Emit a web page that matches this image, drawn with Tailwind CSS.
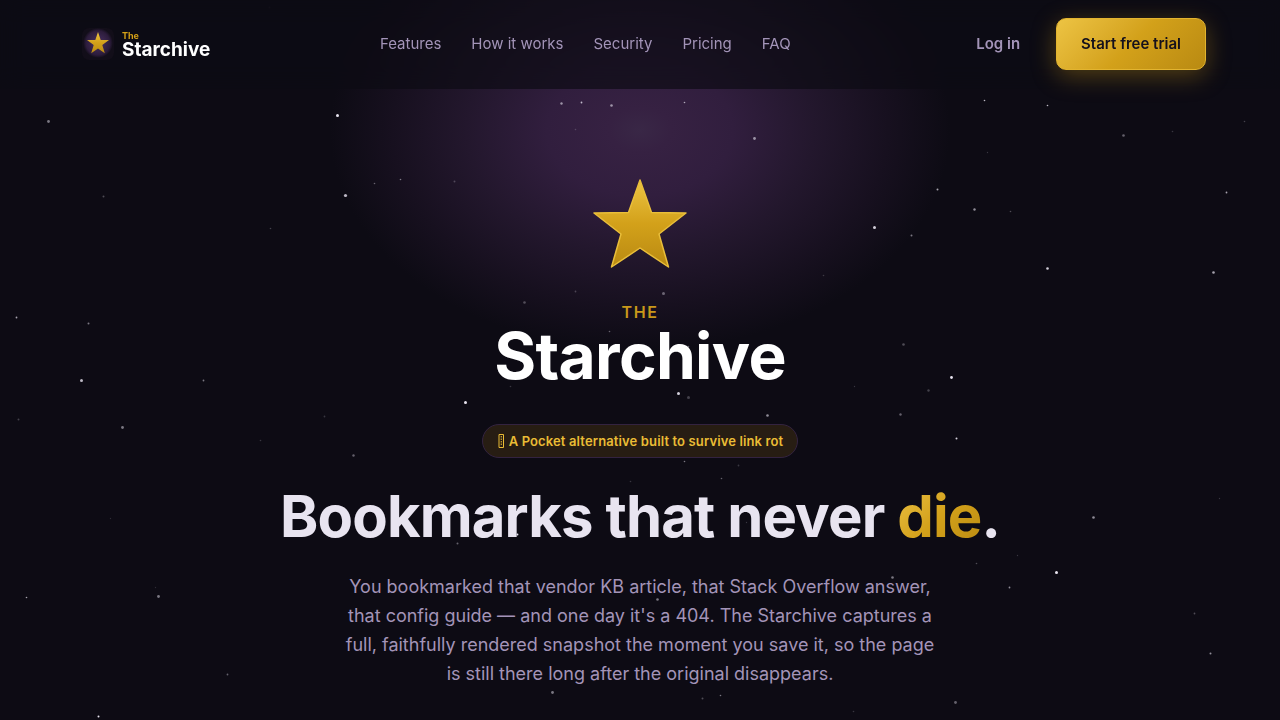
<!DOCTYPE html>
<html lang="en">
<head>
    <meta charset="UTF-8">
    <meta name="viewport" content="width=device-width, initial-scale=1.0">
    <title>The Starchive</title>
    <script src="https://cdn.jsdelivr.net/npm/@tailwindcss/browser@4"></script>
</head>
<body class="relative h-screen overflow-hidden bg-[#0d0b14] font-['Inter',sans-serif] text-[#e8e4f0]">
    <!-- Night sky -->
    <div class="absolute left-1/2 top-[-90px] h-[440px] w-[620px] -translate-x-1/2 bg-[radial-gradient(closest-side,#392746_0%,#362142_10%,#311e3e_30%,#23172d_56%,#17101f_80%,#0d0b14_100%)]"></div>
    <svg id="sky" class="absolute inset-0 h-full w-full" fill="#e8e4f0" aria-hidden="true"></svg>

    <!-- Nav -->
    <header class="relative z-10 border-b border-transparent bg-[#0d0b14]/70 backdrop-blur-md">
        <nav class="mx-auto flex max-w-[1180px] items-center justify-between px-6 py-[18px]">
            <a href="#" class="flex items-center gap-2 px-2">
                <svg class="h-8 w-8" viewBox="0 0 32 32">
                    <defs>
                        <radialGradient id="logoGlow">
                            <stop offset="0" stop-color="#4a3163"/>
                            <stop offset=".8" stop-color="#2c1c3b"/>
                            <stop offset="1" stop-color="#110d18"/>
                        </radialGradient>
                        <linearGradient id="gold" x1="0" y1="0" x2="0" y2="1">
                            <stop offset="0" stop-color="#edc443"/>
                            <stop offset=".5" stop-color="#d3a11a"/>
                            <stop offset="1" stop-color="#b98a12"/>
                        </linearGradient>
                    </defs>
                    <rect width="32" height="32" rx="7" fill="#120e19"/>
                    <circle cx="16" cy="15" r="15" fill="url(#logoGlow)"/>
                    <path d="M16 4l2.700 8h8.300l-6.700 5 2.500 8.300L16 20.500l-6.800 4.800 2.500-8.300L5 12h8.300z" fill="url(#gold)"/>
                </svg>
                <span class="flex flex-col font-bold">
                    <span class="text-[9px] leading-3 text-[#d4a017]">The</span>
                    <span class="text-[19px] leading-4 text-white">Starchive</span>
                </span>
            </a>
            <div class="flex gap-[30px] text-[15px] text-[#a394b8]">
                <a href="#">Features</a>
                <a href="#">How it works</a>
                <a href="#">Security</a>
                <a href="#">Pricing</a>
                <a href="#">FAQ</a>
            </div>
            <div class="flex items-center gap-3 text-[15px] font-semibold">
                <a href="#" class="px-6 text-[#a394b8]">Log in</a>
                <a href="#" class="rounded-[10px] border border-[#e3b42f] bg-linear-135 from-[#edc443] via-[#d3a11a] to-[#b98a12] px-6 py-[14px] leading-[22px] text-[#14101c] shadow-[0_6px_24px_rgba(212,160,23,0.35)]">Start free trial</a>
            </div>
        </nav>
    </header>

    <!-- Hero -->
    <main class="relative flex flex-col items-center px-6 pt-[85px] text-center">
        <svg class="h-[100px] w-[100px]" viewBox="0 0 100 100" aria-hidden="true">
            <path d="M50 6l11.500 32.500L96 39 69 60l9.500 33L50 74 21.500 93 31 60 4 39l34.500-.5z" fill="url(#gold)" stroke="#e9be3a" stroke-width="1.500" stroke-linejoin="round"/>
        </svg>
        <p class="mt-7 text-base leading-5 font-semibold tracking-widest text-[#c9981a]">THE</p>
        <p class="text-[64px] leading-[68px] font-bold tracking-[-0.01em] text-white">Starchive</p>
        <p class="mt-[34px] flex items-center gap-1 rounded-full border border-[#332340] bg-[#271d13] px-[14px] py-[6px] text-[13px] leading-5 font-semibold tracking-[0.01em] text-[#eabc35]">
            <svg class="h-4 w-2" viewBox="0 0 8 16" fill="none" stroke="currentColor" aria-hidden="true">
                <path d="M2 1.500h4.500v13H2z"/>
                <path d="M4.250 3v10" stroke-dasharray="1.500 1"/>
            </svg>
            A Pocket alternative built to survive link rot
        </p>
        <h1 class="mt-6 text-[58px] leading-[68px] font-bold tracking-[-0.015em]">Bookmarks that never <span class="bg-linear-135 from-[#edc443] via-[#d3a11a] to-[#b98a12] bg-clip-text text-transparent">die</span>.</h1>
        <p class="mt-[22px] max-w-[600px] text-lg leading-[29px] text-[#a394b8]">You bookmarked that vendor KB article, that Stack Overflow answer, that config guide — and one day it's a 404. The Starchive captures a full, faithfully rendered snapshot the moment you save it, so the page is still there long after the original disappears.</p>
    </main>

    <script>
        // x, y, radius, opacity
        const stars = [
            [48, 121, 1.4, .5], [103, 196, 1, .3], [337, 115, 1.5, 1], [345, 195, 1.6, .8], [374, 183, .8, .4],
            [400, 179, .8, .5], [454, 181, 1, .25], [270, 228, .8, .25], [269, 7, 1, .25], [561, 103, 1.2, .6],
            [581, 102, .9, .8], [611, 105, 1.3, .6], [684, 102, .8, .7], [754, 138, 1.4, .6], [984, 100, .8, .8],
            [1047, 105, .8, .8], [1123, 135, 1.3, .4], [1172, 131, .8, .2], [1244, 121, .8, .25], [987, 152, .7, .2],
            [937, 189, 1, .7], [974, 209, 1.2, .6], [1010, 211, .8, .3], [874, 227, 1.5, .9], [911, 235, 1, .5],
            [1226, 192, .9, .7], [1047, 268, 1.3, .9], [1213, 272, 1.3, .7], [823, 275, .8, .2], [16, 317, .9, .7],
            [88, 323, 1, .5], [81, 380, 1.5, .8], [203, 380, .9, .5], [18, 419, 1, .25], [122, 427, 1.4, .5],
            [324, 416, .9, .2], [260, 440, .8, .2], [353, 455, 1.2, .4], [465, 402, 1.5, 1], [524, 302, 1.3, .3],
            [575, 291, .9, .25], [663, 293, 1.5, .4], [609, 331, .8, .4], [688, 346, .8, .4], [510, 386, .8, .2],
            [678, 393, 1.5, .9], [688, 397, 1.5, .25], [767, 415, 1.3, .6], [903, 344, 1.3, .3], [951, 377, 1.4, 1],
            [928, 390, 1.2, .25], [900, 414, 1.2, .4], [854, 386, .7, .2], [956, 438, 1, .9], [684, 461, .8, .5],
            [738, 465, .9, .2], [721, 478, .8, .4], [630, 481, .8, .2], [746, 522, .7, .2], [1093, 517, 1.3, .6],
            [1219, 498, .7, .2], [517, 534, .9, 1], [457, 543, 1, .4], [976, 563, .8, .3], [1017, 555, .7, .2],
            [1056, 572, 1.5, 1], [1009, 587, .9, .6], [892, 577, 1.3, .5], [657, 599, 1.3, .5], [1194, 613, .9, .3],
            [1210, 653, 1, .6], [158, 596, 1.4, .5], [26, 597, .8, .7], [227, 674, .9, .4], [552, 692, 1.4, .5],
            [702, 698, 1, .3], [720, 695, .8, .5], [955, 702, 1.4, .4], [853, 711, .8, .2], [98, 716, 1, 1],
            [575, 129, .8, .2], [297, 70, .7, .15], [552, 75, .8, .15], [110, 518, .7, .15], [155, 587, .7, .15]
        ];

        const sky = document.getElementById('sky');
        stars.forEach(([x, y, r, opacity]) => {
            const star = document.createElementNS('http://www.w3.org/2000/svg', 'circle');
            star.setAttribute('cx', (x + 0.5) / 12.8 + '%');
            star.setAttribute('cy', (y + 0.5) / 7.2 + '%');
            star.setAttribute('r', r);
            star.setAttribute('opacity', opacity);
            sky.appendChild(star);
        });
    </script>
</body>
</html>
